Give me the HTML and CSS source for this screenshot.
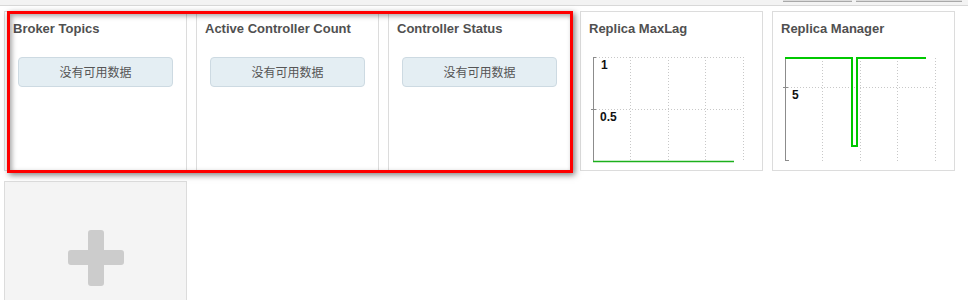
FILE: index.html
```html
<!DOCTYPE html>
<html lang="en">
<head>
  <meta charset="UTF-8">
  <title>Kafka Dashboard</title>
  <meta name="viewport" content="width=device-width, initial-scale=1.0">
  <link rel="stylesheet" href="styles.css">
</head>
<body>

<div class="toolbar">
  <span class="tool-btn tool-btn-small"></span>
  <span class="tool-btn tool-btn-wide"></span>
</div>

<div class="panels">
  <div class="panel">
    <h3 class="panel-title">Broker Topics</h3>
    <div class="no-data">没有可用数据</div>
  </div>
  <div class="panel">
    <h3 class="panel-title">Active Controller Count</h3>
    <div class="no-data">没有可用数据</div>
  </div>
  <div class="panel">
    <h3 class="panel-title">Controller Status</h3>
    <div class="no-data">没有可用数据</div>
  </div>

  <div class="panel">
    <h3 class="panel-title">Replica MaxLag</h3>
    <svg class="chart" width="181" height="114" viewBox="0 0 181 114">
      <g class="grid">
        <line x1="12" y1="7.5" x2="162" y2="7.5"/>
        <line x1="12" y1="59.5" x2="162" y2="59.5"/>
        <line x1="49.5" y1="7" x2="49.5" y2="112"/>
        <line x1="87.5" y1="7" x2="87.5" y2="112"/>
        <line x1="124.5" y1="7" x2="124.5" y2="112"/>
        <line x1="162.5" y1="7" x2="162.5" y2="112"/>
      </g>
      <g class="axis">
        <line x1="12.5" y1="7" x2="12.5" y2="112"/>
        <line x1="12" y1="7.5" x2="15" y2="7.5"/>
        <line x1="10" y1="59.5" x2="15" y2="59.5"/>
      </g>
      <line class="series series-thin" x1="12" y1="111.5" x2="153" y2="111.5"/>
      <text class="tick-label" x="20" y="19">1</text>
      <text class="tick-label" x="19" y="71">0.5</text>
    </svg>
  </div>

  <div class="panel">
    <h3 class="panel-title">Replica Manager</h3>
    <svg class="chart" width="181" height="114" viewBox="0 0 181 114">
      <g class="grid">
        <line x1="12" y1="37.5" x2="162" y2="37.5"/>
        <line x1="49.5" y1="8" x2="49.5" y2="111"/>
        <line x1="87.5" y1="8" x2="87.5" y2="111"/>
        <line x1="124.5" y1="8" x2="124.5" y2="111"/>
        <line x1="162.5" y1="8" x2="162.5" y2="111"/>
      </g>
      <g class="axis">
        <line x1="12.5" y1="7" x2="12.5" y2="111"/>
        <line x1="10" y1="37.5" x2="15" y2="37.5"/>
        <line x1="12" y1="110.5" x2="16" y2="110.5"/>
      </g>
      <polyline class="series" points="12,8 79,8 79,96 84,96 84,8 153,8"/>
      <text class="tick-label" x="19" y="49">5</text>
    </svg>
  </div>

  <div class="panel panel-add">
    <svg width="56" height="56" viewBox="0 0 56 56">
      <rect class="plus" x="20" y="0" width="16" height="56" rx="3"/>
      <rect class="plus" x="0" y="20" width="56" height="15" rx="3"/>
    </svg>
  </div>
</div>

<div class="highlight"></div>

</body>
</html>
```

FILE: styles.css
```css
* { box-sizing: border-box; }
body {
  margin: 0;
  background: #fff;
  font-family: "Liberation Sans", Arial, "Noto Sans CJK SC", sans-serif;
  color: #555;
  overflow: hidden;
}
.toolbar {
  height: 6px;
  background: #f3f3f3;
  border-bottom: 1px solid #d8d8d8;
  display: flex;
  justify-content: flex-end;
  align-items: flex-start;
  gap: 4px;
  padding-right: 6px;
  overflow: hidden;
}
.tool-btn {
  display: block;
  height: 2px;
  background: #dcdcdc;
  border-bottom: 1px solid #a9a9a9;
}
.tool-btn-small { width: 69px; }
.tool-btn-wide { width: 106px; }
.panels {
  display: flex;
  flex-wrap: wrap;
  gap: 10px 9px;
  padding: 5px 0 0 4px;
}
.panel {
  width: 183px;
  height: 160px;
  background: #fff;
  border: 1px solid #dcdcdc;
}
.panel-title {
  margin: 0;
  padding: 9px 8px 0;
  font-size: 13px;
  line-height: 15px;
  font-weight: bold;
  color: #505050;
  white-space: nowrap;
}
.no-data {
  margin: 21px 13px 0;
  height: 30px;
  border: 1px solid #cddae2;
  border-radius: 4px;
  background: #e4eef3;
  font-family: "Noto Sans CJK SC", sans-serif;
  font-size: 12px;
  line-height: 28px;
  text-align: center;
  color: #555;
}
.chart {
  display: block;
  margin-top: 14px;
}
.grid line {
  stroke: #c8c8c8;
  stroke-width: 1;
  stroke-dasharray: 1 2;
}
.axis line {
  stroke: #8c8c8c;
  stroke-width: 1;
}
.series {
  fill: none;
  stroke: #00c800;
  stroke-width: 2;
}
.series-thin {
  stroke: #1cb01c;
  stroke-width: 1.5;
}
.tick-label {
  font-family: "Liberation Sans", Arial, sans-serif;
  font-size: 12px;
  font-weight: bold;
  fill: #111;
}
.panel-add {
  background: #f4f4f4;
  display: flex;
  justify-content: center;
  padding-top: 48px;
}
.plus { fill: #cccccc; }
.highlight {
  position: absolute;
  left: 7px;
  top: 11px;
  width: 566px;
  height: 162px;
  border: 3px solid #f00;
  box-shadow: 2px 2px 6px rgba(0, 0, 0, 0.5), inset 2px 2px 5px rgba(0, 0, 0, 0.35);
  pointer-events: none;
}
```
